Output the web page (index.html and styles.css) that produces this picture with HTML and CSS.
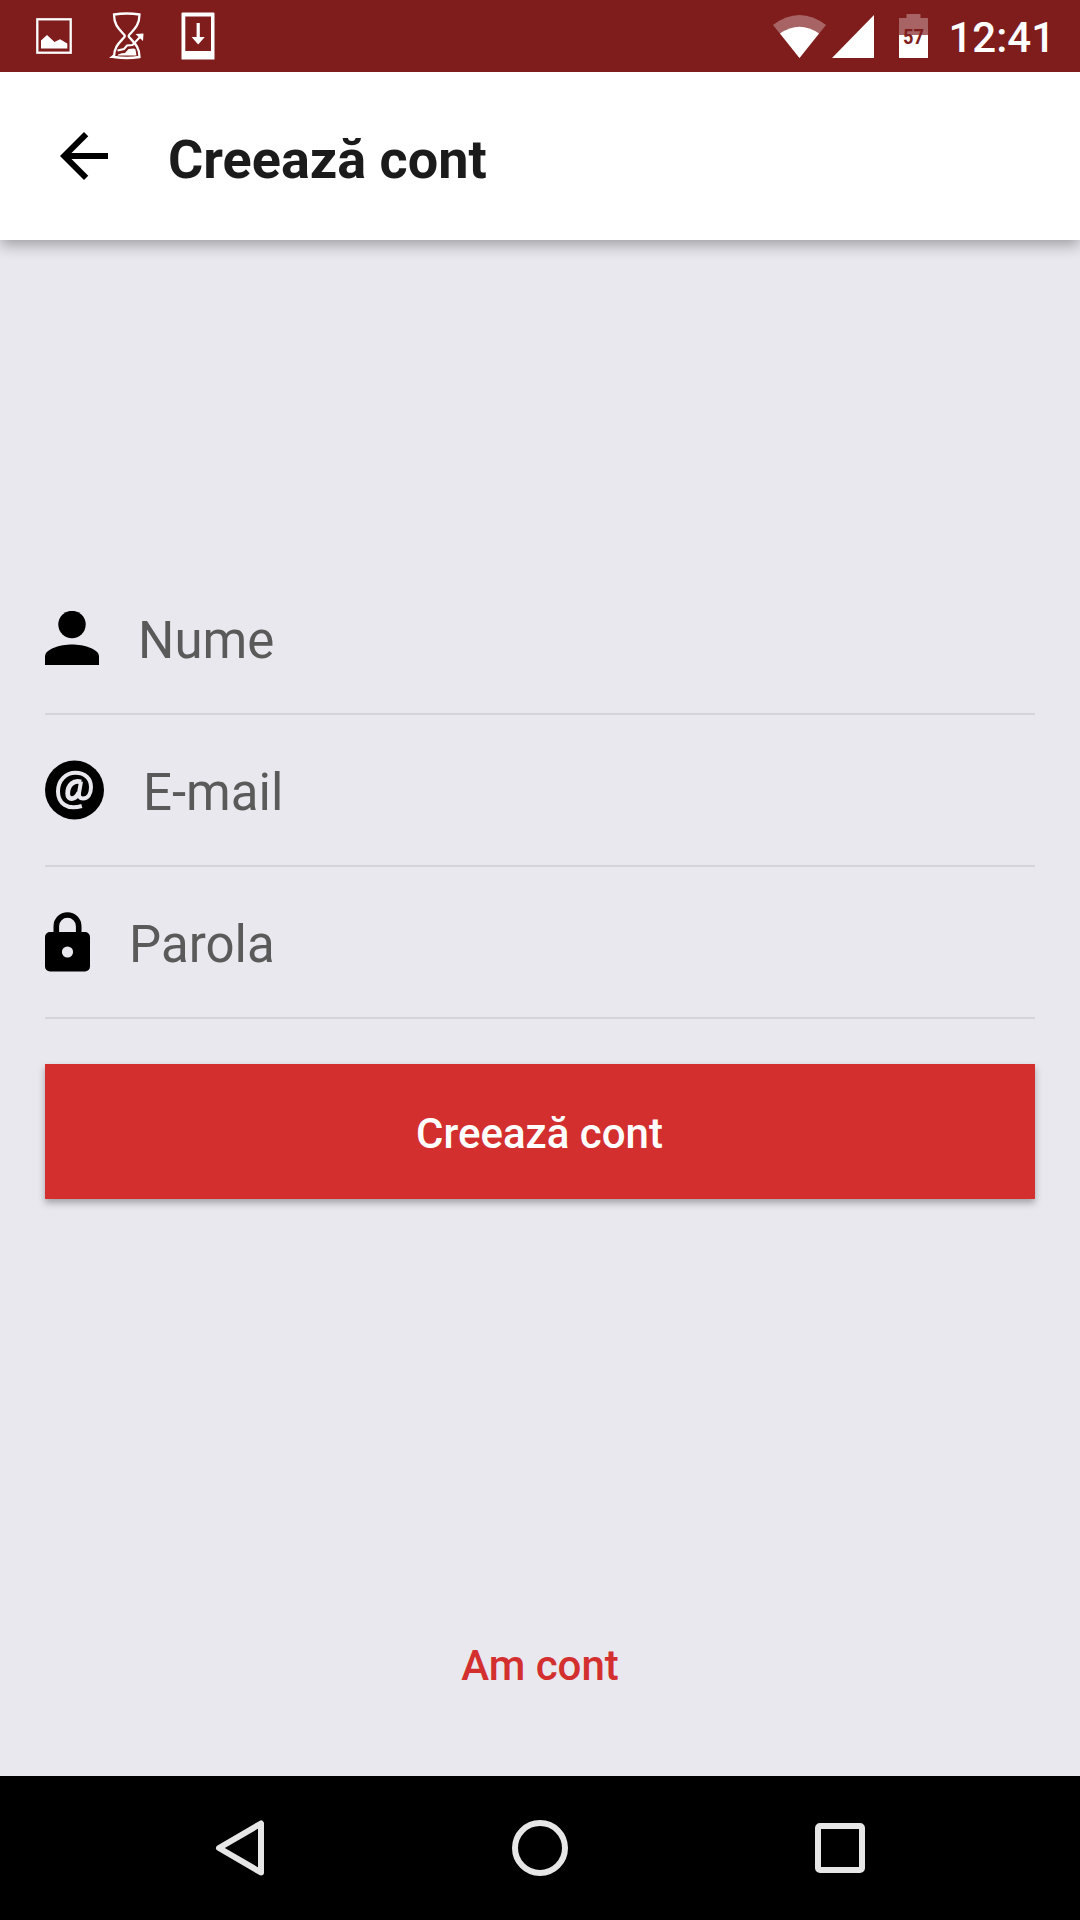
FILE: index.html
```
<!DOCTYPE html>
<html lang="ro">
<head>
<meta charset="utf-8">
<title>Creează cont</title>
<link rel="stylesheet" href="styles.css">
</head>
<body>
<div class="screen">
  <header class="status">
    <div class="status-left">
      <svg width="36" height="36" viewBox="0 0 36 36"><rect x="1.300" y="1.300" width="33.400" height="33.400" fill="none" stroke="#fff" stroke-width="2.300"/><path d="M5 30.500V22.500l6-5.500 7.500 7 5.500-2.700 7.300 4.200v5z" fill="#fff"/></svg>
      <svg class="hourglass" width="36" height="48" viewBox="0 0 36 48"><path d="M5 2.500Q18 .5 30.500 2.500C30.500 13 25.500 17 20.500 22.500Q19 24 20.500 25.500C25.500 31 30.500 35 30.500 45Q18 47 5 45C5 35 10 31 15 25.500Q16.500 24 15 22.500C10 17 5 13 5 2.500Z" fill="none" stroke="#fff" stroke-width="2.300"/><path d="M8.500 43.500Q9 41.500 16 41L19.500 37L25 36.500L26.500 37.500L27.500 43.500Z" fill="#fff"/><path d="M8.500 38.500L15 37L18 33.500L23.500 33L31 25" fill="none" stroke="#fff" stroke-width="2"/><path d="M0 46L5.500 41.500V46ZM26.500 22L34.500 21.500L34 29Z" fill="#fff"/></svg>
      <svg class="download" width="34" height="48" viewBox="0 0 34 48"><path fill="#fff" fill-rule="evenodd" d="M1.500 .5h31a1 1 0 0 1 1 1v46H.5v-46a1 1 0 0 1 1-1zM4.300 4.500v34.500h25.700V4.500z"/><path fill="#fff" d="M15.600 11h3.200v14h5l-6.600 7.500-6.600-7.500h5z"/></svg>
    </div>
    <div class="status-right">
      <svg width="53" height="43" viewBox="0 0 53 43"><path d="M0 10Q26.500-10 53 10L26.500 43Z" fill="#a86464"/><path d="M7 18.500Q26.500 5 46 18.500L26.500 43Z" fill="#fff"/></svg>
      <svg class="signal" width="42" height="43" viewBox="0 0 42 43"><path d="M42 0V43H0Z" fill="#fff"/></svg>
      <div class="battery">
        <svg width="29" height="44" viewBox="0 0 29 44"><path d="M7.500 0h14v4H29v17H0V4h7.500z" fill="#a86464"/><path d="M0 21h29v23H0z" fill="#fff"/></svg>
        <span class="level">57</span>
      </div>
      <span class="clock">12:41</span>
    </div>
  </header>

  <div class="appbar">
    <svg width="72" height="72" viewBox="0 0 24 24"><path d="M20 11H7.830l5.590-5.590L12 4l-8 8 8 8 1.410-1.410L7.830 13H20z"/></svg>
    <h1 class="title">Creează cont</h1>
  </div>

  <main class="content">
    <form class="form">
      <label class="field">
        <svg width="54" height="54" viewBox="0 0 54 54"><circle cx="27" cy="13.500" r="13.700"/><path d="M0 54V45.500C0 38 15 33.500 27 33.500S54 38 54 45.500V54Z"/></svg>
        <span class="hint">Nume</span>
      </label>
      <label class="field">
        <svg width="59" height="60" viewBox="0 0 59 60"><circle cx="29.500" cy="30" r="29.500"/><g fill="none" stroke="#e9e8ee" stroke-width="4"><path d="M36.800 46C22 50.500 13 43 13 31.500C13 20 21 12.800 30.500 12.800C40 12.800 46 18.800 46 27C46 34 43 38.500 38 38.500C34.500 38.500 33.500 36 34 33L36 21.500"/><path stroke-width="4.800" d="M36 22C29 19.500 22.700 25 22.700 33.500C22.700 40.500 30 40.500 34 32.500"/></g></svg>
        <span class="hint">E-mail</span>
      </label>
      <label class="field">
        <svg width="45" height="60" viewBox="0 0 45 60"><path d="M11.300 22V14.200a11.200 11.200 0 0 1 22.400 0V22" fill="none" stroke="#000" stroke-width="5.600"/><path fill-rule="evenodd" d="M5 20h35a5 5 0 0 1 5 5v29.500a5 5 0 0 1-5 5H5a5 5 0 0 1-5-5V25a5 5 0 0 1 5-5zM22.500 34.400a5.600 5.600 0 1 0 0 11.200 5.600 5.600 0 0 0 0-11.200z"/></svg>
        <span class="hint">Parola</span>
      </label>
      <button type="button" class="submit">Creează cont</button>
    </form>
    <a class="login">Am cont</a>
  </main>

  <nav class="navbar">
    <svg width="50" height="58" viewBox="0 0 50 58"><path d="M46 4.500V53.500L4 29Z" fill="none" stroke="#e6e6e6" stroke-width="6" stroke-linejoin="round"/></svg>
    <svg width="56" height="56" viewBox="0 0 56 56"><circle cx="28" cy="28" r="25" fill="none" stroke="#e6e6e6" stroke-width="6"/></svg>
    <svg width="50" height="50" viewBox="0 0 50 50"><rect x="3" y="3" width="44" height="44" rx="2" fill="none" stroke="#e6e6e6" stroke-width="6"/></svg>
  </nav>
</div>
</body>
</html>
```
FILE: styles.css
```
* { box-sizing: border-box; }
body {
  margin: 0;
  font-family: Roboto, sans-serif;
  background: #e9e8ee;
}
svg { display: block; flex: none; }
.screen {
  width: 1080px;
  height: 1920px;
  display: flex;
  flex-direction: column;
  overflow: hidden;
}
.status {
  position: relative;
  z-index: 1;
  height: 72px;
  flex: none;
  display: flex;
  justify-content: space-between;
  align-items: center;
  padding: 0 25px 0 36px;
  background: #7f1d1d;
}
.status-left, .status-right { display: flex; align-items: center; }
.hourglass { margin-left: 37px; }
.download { margin-left: 36px; }
.signal { margin-left: 6px; }
.battery { position: relative; margin-left: 25px; }
.level {
  position: absolute;
  left: 0;
  top: 11px;
  width: 29px;
  text-align: center;
  font-size: 21px;
  line-height: 24px;
  font-weight: 700;
  color: #7f1d1d;
  transform: scaleX(.87);
}
.clock {
  margin-left: 20px;
  padding-top: 3px;
  font-size: 42px;
  line-height: 48px;
  font-weight: 500;
  color: #fff;
}
.appbar {
  height: 168px;
  flex: none;
  display: flex;
  align-items: center;
  gap: 48px;
  padding-left: 48px;
  background: #fff;
  box-shadow: 0 5px 14px rgba(0, 0, 0, .32);
}
.title {
  margin: 0;
  padding-top: 7px;
  font-size: 54px;
  line-height: 64px;
  font-weight: 700;
  color: #1b1b1b;
}
.content {
  flex: 1;
  display: flex;
  flex-direction: column;
  justify-content: space-between;
  padding: 323px 45px 80px;
}
.form { display: flex; flex-direction: column; }
.field {
  height: 152px;
  display: flex;
  align-items: center;
  gap: 39px;
  border-bottom: 2px solid #d5d4da;
}
.hint {
  padding-top: 6px;
  font-size: 51px;
  line-height: 60px;
  color: #5a5a5a;
}
.submit {
  height: 135px;
  margin-top: 45px;
  padding: 4px 1px 0 0;
  border: 0;
  background: #d32f2f;
  box-shadow: 0 4px 7px rgba(0, 0, 0, .3);
  font: 500 42px/50px Roboto, sans-serif;
  color: #fff;
}
.login {
  align-self: center;
  font-size: 42px;
  line-height: 60px;
  font-weight: 500;
  color: #d32f2f;
}
.navbar {
  height: 144px;
  flex: none;
  display: flex;
  align-items: center;
  justify-content: space-between;
  padding: 0 215px;
  background: #000;
}
```
